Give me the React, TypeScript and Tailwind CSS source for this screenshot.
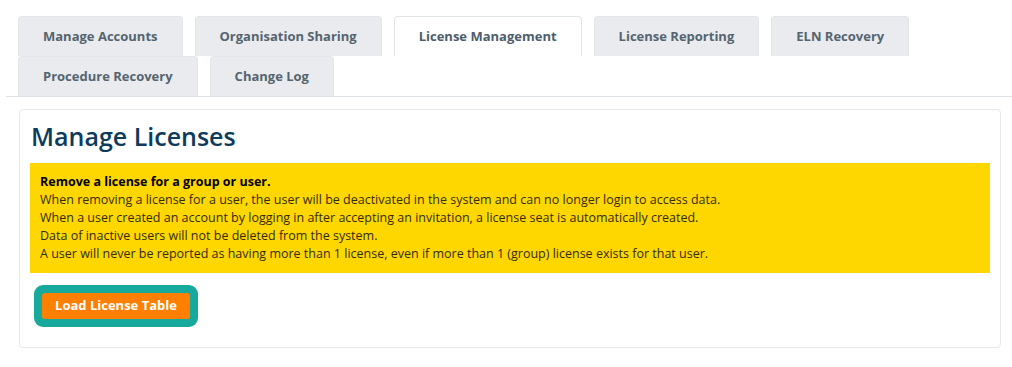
const tabs = [
  'Manage Accounts',
  'Organisation Sharing',
  'License Management',
  'License Reporting',
  'ELN Recovery',
  'Procedure Recovery',
  'Change Log',
]

const active = 'License Management'

export default function App() {
  return (
    <div
      className="min-h-[367px] bg-white pt-[16px] pl-[6px]"
      style={{ fontFamily: '"Open Sans", "Liberation Sans", sans-serif' }}
    >
      {/* Tabs */}
      <div className="flex flex-wrap gap-x-3 border-b border-[#dfe2e5] pl-3">
        {tabs.map((t) => (
          <div
            key={t}
            className={`flex h-[40px] items-center justify-center rounded-t-[4px] border border-b-0 px-[24px] text-[13px] font-bold ${
              t === active
                ? 'border-[#e1e4e8] bg-white text-[#4c5d6b]'
                : 'border-[#e3e6e9] bg-[#e9ebee] text-[#55646f]'
            }`}
          >
            {t}
          </div>
        ))}
      </div>

      {/* Panel */}
      <div className="mt-[12px] mr-[11px] ml-[13px] rounded-[4px] border border-[#e8e8e8] px-[10px] pt-[9px] pb-[28px]">
        <h1 className="pl-px text-[25px] font-semibold leading-[34px] text-[#0d3b5c]">
          Manage Licenses
        </h1>
        <div className="mt-[10px] bg-[#ffd700] px-[10px] pt-[10px] pb-[10px] text-[12.5px] leading-[18px] text-[#332b00]">
          <div className="font-bold text-black">Remove a license for a group or user.</div>
          <div>
            When removing a license for a user, the user will be deactivated in the system and can no
            longer login to access data.
          </div>
          <div>
            When a user created an account by logging in after accepting an invitation, a license seat
            is automatically created.
          </div>
          <div>Data of inactive users will not be deleted from the system.</div>
          <div>
            A user will never be reported as having more than 1 license, even if more than 1 (group)
            license exists for that user.
          </div>
        </div>
        <button
          type="button"
          className="mt-[20px] ml-3 h-[26px] w-[148px] rounded-[3px] bg-[#ff8000] text-[13px] font-bold text-white ring-[8px] ring-[#17a99b]"
        >
          Load License Table
        </button>
      </div>
    </div>
  )
}
